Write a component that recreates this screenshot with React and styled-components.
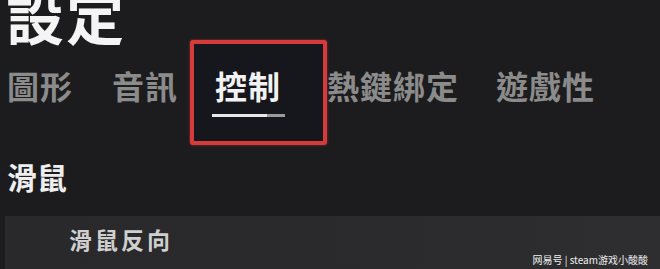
import React from 'react';
import styled, { createGlobalStyle } from 'styled-components';

const CJK = `"Noto Sans CJK TC", "Noto Sans CJK SC", sans-serif`;

const GlobalStyle = createGlobalStyle`
  html, body {
    margin: 0;
    padding: 0;
    background: #1c1c1e;
  }
`;

const Page = styled.div`
  position: relative;
  width: 660px;
  height: 269px;
  overflow: hidden;
  background: #1c1c1e;
  font-family: ${CJK};
  display: flex;
  flex-direction: column;
`;

const Title = styled.h1`
  margin: -5px 0 0 6px;
  height: 45px;
  font-size: 58px;
  line-height: 40px;
  font-weight: 700;
  color: #f4f4f4;
  letter-spacing: 2px;
`;

const TabBar = styled.div`
  display: flex;
  align-items: stretch;
  height: 105px;
  padding-left: 7px;
`;

const Tab = styled.div`
  display: flex;
  flex-direction: column;
  justify-content: center;
  font-size: 32px;
  line-height: 34px;
  font-weight: 700;
  letter-spacing: 1px;
  color: #8b8b8b;
  margin-right: ${(p) => p.gap}px;
  padding-bottom: 16px;
`;

const ActiveTab = styled.div`
  box-sizing: border-box;
  display: flex;
  flex-direction: column;
  justify-content: center;
  align-items: flex-start;
  border: 4px solid #d63b3b;
  border-radius: 3px;
  background: #15171c;
  padding: 0 38px 0 21px;
  color: #f2f2f2;
  font-size: 32px;
  line-height: 34px;
  font-weight: 700;
  letter-spacing: 1px;
  box-shadow: 0 0 3px rgba(214, 59, 59, 0.6);
`;

const Underline = styled.div`
  width: 73px;
  height: 3px;
  margin: 12px 0 0 -3px;
  background: linear-gradient(to right, #e8e8e8 75%, #9a9a9a 75%);
`;

const SectionTitle = styled.div`
  margin: 15px 0 0 7px;
  font-size: 30px;
  line-height: 32px;
  font-weight: 700;
  color: #eeeeee;
`;

const SettingRow = styled.div`
  margin: 24px 0 0 5px;
  flex: 1;
  display: flex;
  align-items: center;
  padding-left: 64px;
  background: linear-gradient(to right, #29292b 0%, #2b2b2d 60%, #2e2e30 100%);
`;

const RowLabel = styled.span`
  font-size: 23px;
  font-weight: 700;
  letter-spacing: 3px;
  color: #cfcfcf;
  margin-top: -8px;
`;

const Watermark = styled.div`
  position: absolute;
  right: 12px;
  bottom: 3px;
  font-size: 10px;
  line-height: 12px;
  color: #f0f0f0;
  font-family: "Noto Sans CJK SC", sans-serif;
  white-space: nowrap;
`;

const tabs = [
  { label: '圖形', gap: 39 },
  { label: '音訊', gap: 12 },
  { label: '控制', active: true },
  { label: '熱鍵綁定', gap: 37 },
  { label: '遊戲性', gap: 0 },
];

export default function App() {
  return (
    <Page>
      <GlobalStyle />
      <Title>設定</Title>
      <TabBar>
        {tabs.map((t) =>
          t.active ? (
            <ActiveTab key={t.label}>
              {t.label}
              <Underline />
            </ActiveTab>
          ) : (
            <Tab key={t.label} gap={t.gap}>
              {t.label}
            </Tab>
          )
        )}
      </TabBar>
      <SectionTitle>滑鼠</SectionTitle>
      <SettingRow>
        <RowLabel>滑鼠反向</RowLabel>
      </SettingRow>
      <Watermark>网易号 | steam游戏小酸酸</Watermark>
    </Page>
  );
}
